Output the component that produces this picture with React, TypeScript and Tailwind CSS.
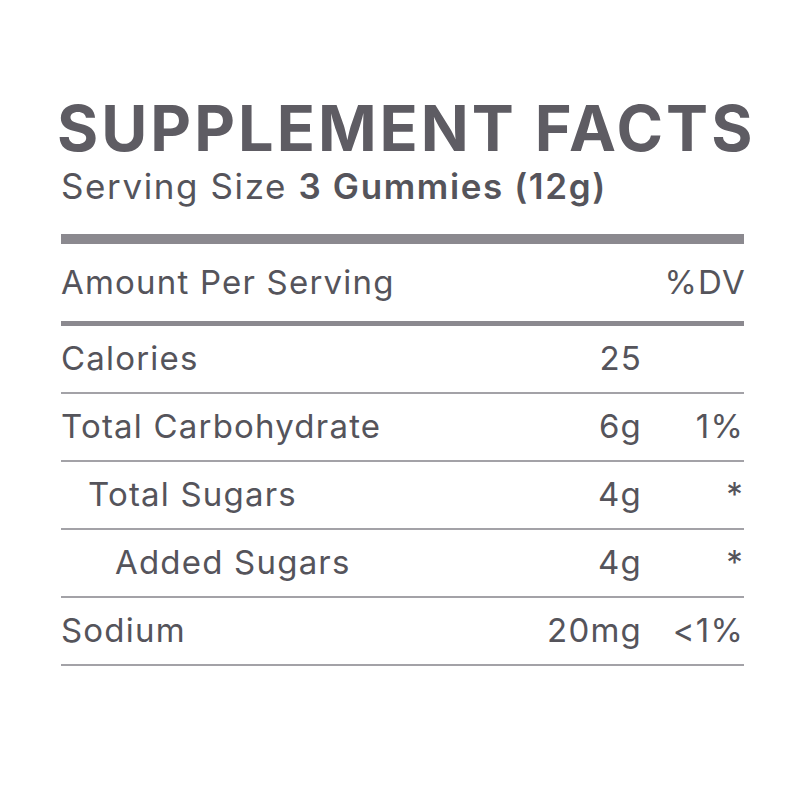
const rows = [
  { label: "Calories", indent: "pl-0", amount: "25", dv: "" },
  { label: "Total Carbohydrate", indent: "pl-0", amount: "6g", dv: "1%" },
  { label: "Total Sugars", indent: "pl-[27px]", amount: "4g", dv: "*" },
  { label: "Added Sugars", indent: "pl-[54px]", amount: "4g", dv: "*" },
  { label: "Sodium", indent: "pl-0", amount: "20mg", dv: "<1%" },
];

export default function App() {
  return (
    <div className="h-[800px] w-[800px] bg-white font-['Inter',sans-serif] text-[#55545b]">
      <div className="ml-[61px] w-[683px] pt-[92px]">
        <h1 className="-ml-[4px] whitespace-nowrap text-[63px] font-bold leading-[72px] tracking-[3px] text-[#5e5c63]">
          SUPPLEMENT FACTS
        </h1>
        <p className="mt-[2px] whitespace-nowrap text-[35px] leading-[40px] tracking-[1.6px]">
          Serving Size <span className="font-semibold">3 Gummies (12g)</span>
        </p>
        <div className="mt-[28px] h-[10px] bg-[#8b898f]" />
        <div className="flex h-[77px] items-center justify-between text-[33px] tracking-[1.2px]">
          <span>Amount Per Serving</span>
          <span className="-mr-[2px]">%DV</span>
        </div>
        <div className="h-[5px] bg-[#8b898f]" />
        {rows.map((r) => (
          <div
            key={r.label}
            className="grid h-[68px] grid-cols-[1fr_120px_102px] items-center border-b-2 border-[#a3a2a7] text-[33px] tracking-[1.2px]"
          >
            <span className={r.indent}>{r.label}</span>
            <span className="text-right">{r.amount}</span>
            <span className="text-right">{r.dv}</span>
          </div>
        ))}
      </div>
    </div>
  );
}
